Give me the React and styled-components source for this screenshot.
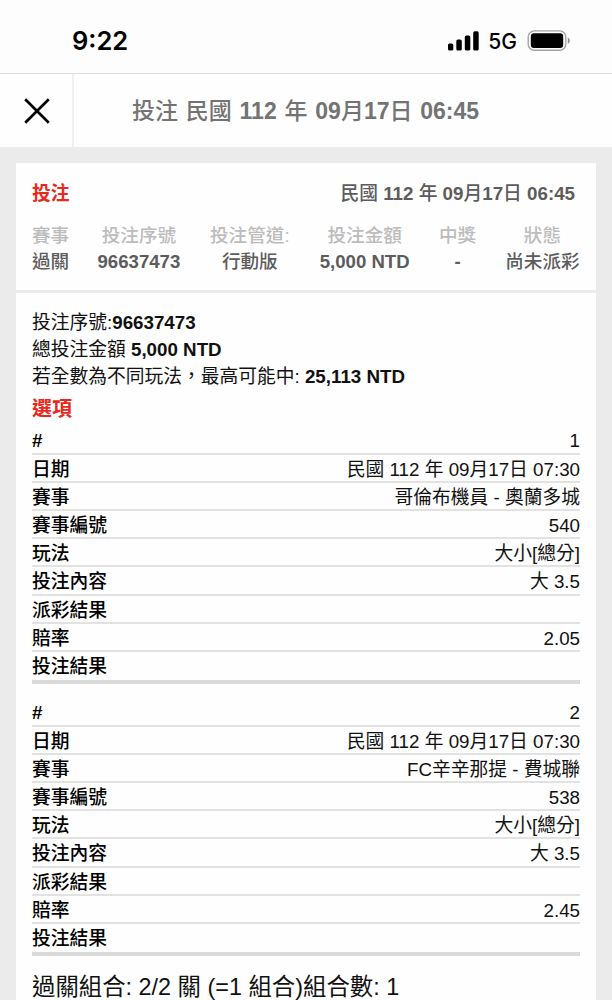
import styled, { createGlobalStyle } from "styled-components";

const picks = [
  [
    ["#", "1"],
    ["日期", "民國 112 年 09月17日 07:30"],
    ["賽事", "哥倫布機員 - 奧蘭多城"],
    ["賽事編號", "540"],
    ["玩法", "大小[總分]"],
    ["投注內容", "大 3.5"],
    ["派彩結果", ""],
    ["賠率", "2.05"],
    ["投注結果", ""],
  ],
  [
    ["#", "2"],
    ["日期", "民國 112 年 09月17日 07:30"],
    ["賽事", "FC辛辛那提 - 費城聯"],
    ["賽事編號", "538"],
    ["玩法", "大小[總分]"],
    ["投注內容", "大 3.5"],
    ["派彩結果", ""],
    ["賠率", "2.45"],
    ["投注結果", ""],
  ],
];

const summary = [
  { label: "賽事", value: "過關", width: 37 },
  { label: "投注序號", value: "96637473", width: 83, latin: true },
  { label: "投注管道:", value: "行動版", width: 82 },
  { label: "投注金額", value: "5,000 NTD", width: 91, latin: true },
  { label: "中獎", value: "-", width: 38, latin: true },
  { label: "狀態", value: "尚未派彩", width: 75 },
];

export default function App() {
  return (
    <Screen>
      <GlobalStyle />
      <StatusBar>
        <Clock>9:22</Clock>
        <StatusIcons>
          <SignalIcon />
          <Network>5G</Network>
          <BatteryIcon />
        </StatusIcons>
      </StatusBar>
      <TitleBar>
        <CloseButton aria-label="close">
          <svg width="26" height="26" viewBox="0 0 26 26">
            <path d="M1.2 1.2 L24.8 24.8 M24.8 1.2 L1.2 24.8" stroke="#000" strokeWidth="2.7" />
          </svg>
        </CloseButton>
        <Title>
          投注 民國 <b>112</b> 年 <b>09</b>月<b>17</b>日 <b>06:45</b>
        </Title>
      </TitleBar>
      <Content>
        <TicketCard>
          <TicketHead>
            <TicketType>投注</TicketType>
            <TicketDate>
              民國 <b>112</b> 年 <b>09</b>月<b>17</b>日 <b>06:45</b>
            </TicketDate>
          </TicketHead>
          <SummaryRow>
            {summary.map((item) => (
              <SummaryCell key={item.label} $width={item.width}>
                <SummaryLabel>{item.label}</SummaryLabel>
                <SummaryValue $latin={item.latin}>{item.value}</SummaryValue>
              </SummaryCell>
            ))}
          </SummaryRow>
        </TicketCard>
        <DetailCard>
          <InfoLine>
            投注序號:<b>96637473</b>
          </InfoLine>
          <InfoLine>
            總投注金額 <b>5,000 NTD</b>
          </InfoLine>
          <InfoLine>
            若全數為不同玩法，最高可能中: <b>25,113 NTD</b>
          </InfoLine>
          <SectionTitle>選項</SectionTitle>
          {picks.map((rows, i) => (
            <PickTable key={i}>
              {rows.map(([label, value]) => (
                <PickRow key={label}>
                  <PickLabel $latin={label === "#"}>{label}</PickLabel>
                  <span>{value}</span>
                </PickRow>
              ))}
            </PickTable>
          ))}
          <ComboLine>過關組合: 2/2 關 (=1 組合)組合數: 1</ComboLine>
        </DetailCard>
      </Content>
    </Screen>
  );
}

function SignalIcon() {
  return (
    <svg width="32" height="20" viewBox="0 0 32 20">
      <rect x="0" y="12.5" width="5.3" height="7" rx="1.6" />
      <rect x="8.3" y="8.5" width="5.5" height="11" rx="1.6" />
      <rect x="16.8" y="4.5" width="5.5" height="15" rx="1.6" />
      <rect x="25.2" y="0.3" width="5.5" height="19.2" rx="1.6" />
    </svg>
  );
}

function BatteryIcon() {
  return (
    <svg width="44" height="22" viewBox="0 0 44 22">
      <rect x="1.2" y="0.9" width="37.6" height="19.4" rx="6" fill="none" stroke="#a3a3a3" strokeWidth="1.4" />
      <rect x="3.8" y="3.3" width="32.4" height="14.6" rx="3.2" />
      <path d="M40.8 7.6 C43.4 8.6 43.4 12.8 40.8 13.8 Z" fill="#8e8e8e" />
    </svg>
  );
}

const GlobalStyle = createGlobalStyle`
  * {
    box-sizing: border-box;
  }
  body {
    margin: 0;
    overflow: hidden;
    background: #ebebeb;
    font-family: "Liberation Sans", "Noto Sans CJK TC", sans-serif;
  }
`;

const Screen = styled.div`
  height: 1000px;
  overflow: hidden;
  color: #111;
`;

const StatusBar = styled.div`
  height: 74px;
  padding: 8px 41px 0 72px;
  display: flex;
  align-items: center;
  justify-content: space-between;
  background: #fdfdfd;
  border-bottom: 1px solid #dcdcdc;
`;

const Clock = styled.div`
  font-family: Inter, sans-serif;
  font-size: 25.5px;
  font-weight: 600;
  color: #000;
`;

const StatusIcons = styled.div`
  display: flex;
  align-items: center;
`;

const Network = styled.span`
  margin: 1px 10px 0 8px;
  font-family: Inter, sans-serif;
  font-size: 21px;
  font-weight: 500;
  color: #000;
`;

const TitleBar = styled.div`
  height: 73px;
  display: flex;
  background: #fefefe;
`;

const CloseButton = styled.button`
  width: 74px;
  padding: 0 0 0 2px;
  display: flex;
  align-items: center;
  justify-content: center;
  background: none;
  border: none;
  border-right: 2px solid #f0f0f0;
`;

const Title = styled.div`
  padding-left: 58px;
  line-height: 75px;
  font-size: 23px;
  font-weight: 500;
  word-spacing: 1.4px;
  white-space: nowrap;
  color: #737373;
`;

const Content = styled.div`
  padding: 16px 16px 0;
`;

const TicketCard = styled.div`
  height: 127px;
  padding: 16px 16px 0;
  background: #fefefe;
`;

const TicketHead = styled.div`
  height: 28px;
  padding-right: 5px;
  display: flex;
  justify-content: space-between;
  line-height: 29px;
  font-size: 18.75px;
  font-weight: 500;
`;

const TicketType = styled.div`
  font-weight: 700;
  color: #e8281c;
`;

const TicketDate = styled.div`
  color: #5c5c5c;
`;

const SummaryRow = styled.div`
  margin-top: 16px;
  display: flex;
  justify-content: space-between;
`;

const SummaryCell = styled.div`
  width: ${(props) => props.$width}px;
  display: flex;
  flex-direction: column;
  align-items: center;
  white-space: nowrap;
  font-size: 18.6px;
  line-height: 26px;
`;

const SummaryLabel = styled.div`
  font-weight: 500;
  color: #bcbcbc;
`;

const SummaryValue = styled.div`
  font-weight: ${(props) => (props.$latin ? 700 : 500)};
  color: #5c5c5c;
`;

const DetailCard = styled.div`
  height: 720px;
  margin-top: 3px;
  padding: 16px 16px 0;
  background: #fefefe;
`;

const InfoLine = styled.div`
  height: 26.8px;
  line-height: 27px;
  font-size: 18.75px;
  white-space: nowrap;
`;

const SectionTitle = styled.div`
  height: 37px;
  line-height: 40px;
  font-size: 20px;
  font-weight: 700;
  color: #e8281c;
`;

const PickTable = styled.div`
  margin-bottom: 14px;
  border-bottom: 4px solid #dadada;
`;

const PickRow = styled.div`
  height: 28.22px;
  display: flex;
  justify-content: space-between;
  line-height: 29px;
  font-size: 18.75px;
  border-bottom: 2px solid #e2e2e2;

  &:last-child {
    border-bottom: none;
  }
`;

const PickLabel = styled.span`
  font-weight: ${(props) => (props.$latin ? 700 : 500)};
  color: #000;
`;

const ComboLine = styled.div`
  line-height: 34px;
  font-size: 23.4px;
  white-space: nowrap;
`;
